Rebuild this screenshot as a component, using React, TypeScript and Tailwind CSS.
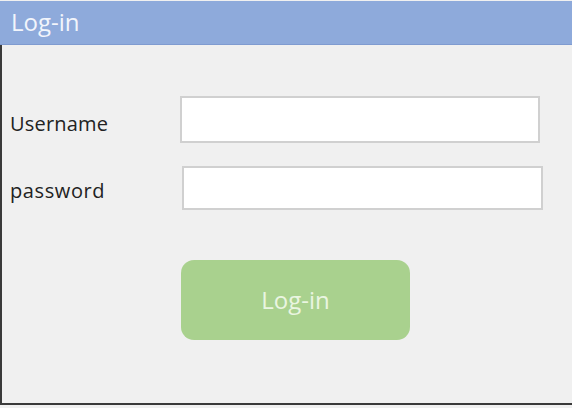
export default function App() {
  return (
    <div className="w-[572px] h-[408px] bg-[#f0f0f0] font-['Open_Sans',sans-serif] flex flex-col">
      <header className="h-[44px] mt-px bg-[#8eaadb] border-b border-[#7f9bd0] flex items-center px-[11px]">
        <span className="text-[24px] leading-[30px] text-[#f2f5fb] -mt-[2px]">Log-in</span>
      </header>
      <div className="flex-1 mb-[3px] border-l-2 border-b-2 border-[#3a3a3a] pt-[51px] pl-[8px]">
        <div className="flex items-start h-[47px]">
          <span className="w-[170px] pt-[13px] text-[20px] leading-[30px] tracking-[0.2px] text-[#222]">Username</span>
          <input className="w-[360px] h-[47px] bg-white border-2 border-[#d0d0d0] outline-none" />
        </div>
        <div className="flex items-start h-[44px] mt-[23px]">
          <span className="w-[172px] pt-[10px] text-[20px] leading-[30px] tracking-[0.6px] text-[#222]">password</span>
          <input type="password" className="w-[361px] h-[44px] bg-white border-2 border-[#d0d0d0] outline-none" />
        </div>
        <button className="ml-[171px] mt-[50px] w-[229px] h-[80px] rounded-[13px] bg-[#a9d18e] text-[24px] text-[#eaf5e1]">
          Log-in
        </button>
      </div>
    </div>
  );
}
